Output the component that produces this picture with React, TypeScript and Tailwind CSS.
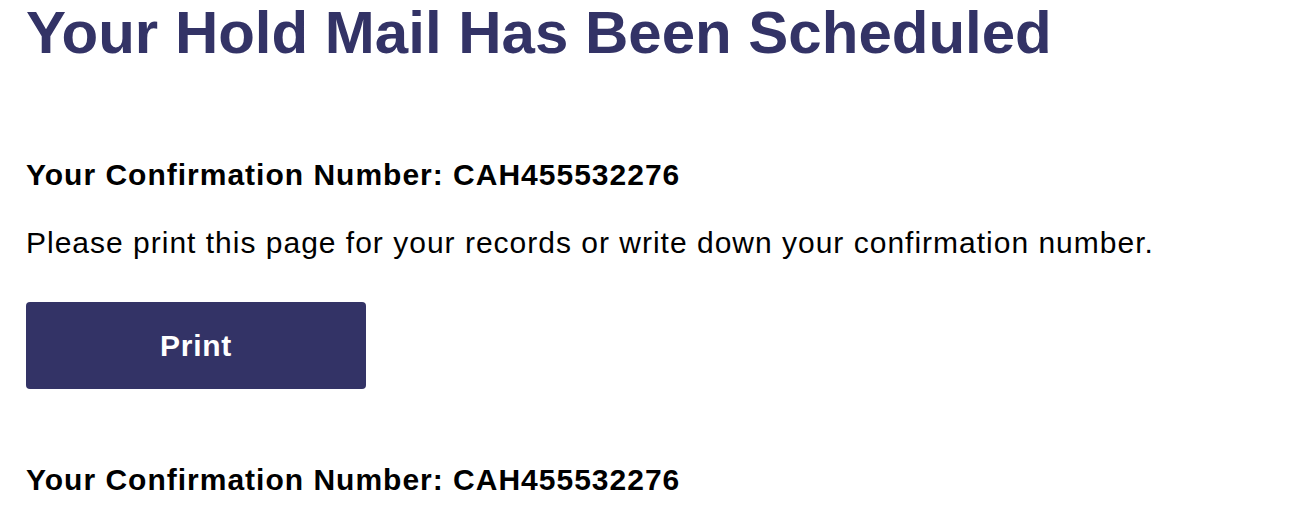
export default function App() {
  return (
    <div className="bg-white w-[1316px] h-[506px] overflow-hidden px-[26px]" style={{ fontFamily: '"Liberation Sans", Arial, sans-serif' }}>
      <h1 className="text-[60px] leading-[66px] font-bold text-[#333366]">Your Hold Mail Has Been Scheduled</h1>
      <div className="mt-[92px] text-[30px] leading-[34px] tracking-[1px] font-bold text-black">Your Confirmation Number: CAH455532276</div>
      <p className="mt-[34px] text-[30px] leading-[34px] tracking-[1px] text-black">Please print this page for your records or write down your confirmation number.</p>
      <button className="mt-[42px] w-[340px] h-[87px] rounded-[4px] bg-[#333366] text-white text-[30px] tracking-[0.7px] font-bold">Print</button>
      <div className="mt-[74px] text-[30px] leading-[34px] tracking-[1px] font-bold text-black">Your Confirmation Number: CAH455532276</div>
    </div>
  );
}
